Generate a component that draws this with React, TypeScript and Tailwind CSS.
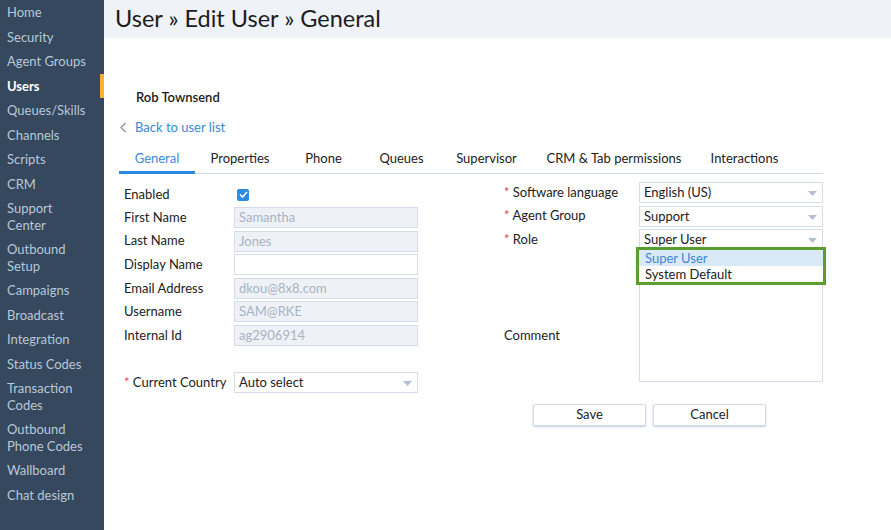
import React from "react";

const NAV: { label: string[]; active?: boolean }[] = [
  { label: ["Home"] },
  { label: ["Security"] },
  { label: ["Agent Groups"] },
  { label: ["Users"], active: true },
  { label: ["Queues/Skills"] },
  { label: ["Channels"] },
  { label: ["Scripts"] },
  { label: ["CRM"] },
  { label: ["Support", "Center"] },
  { label: ["Outbound", "Setup"] },
  { label: ["Campaigns"] },
  { label: ["Broadcast"] },
  { label: ["Integration"] },
  { label: ["Status Codes"] },
  { label: ["Transaction", "Codes"] },
  { label: ["Outbound", "Phone Codes"] },
  { label: ["Wallboard"] },
  { label: ["Chat design"] },
];

const TABS: { label: string; w: string }[] = [
  { label: "General", w: "w-[76px]" },
  { label: "Properties", w: "w-[90px]" },
  { label: "Phone", w: "w-[77px]" },
  { label: "Queues", w: "w-[79px]" },
  { label: "Supervisor", w: "w-[91px]" },
  { label: "CRM & Tab permissions", w: "w-[164px]" },
  { label: "Interactions", w: "w-[97px]" },
];

const LEFT_FIELDS: { label: string; value: string; disabled: boolean }[] = [
  { label: "First Name", value: "Samantha", disabled: true },
  { label: "Last Name", value: "Jones", disabled: true },
  { label: "Display Name", value: "", disabled: false },
  { label: "Email Address", value: "dkou@8x8.com", disabled: true },
  { label: "Username", value: "SAM@RKE", disabled: true },
  { label: "Internal Id", value: "ag2906914", disabled: true },
];

function Caret() {
  return (
    <svg width="9" height="5" viewBox="0 0 9 5" className="absolute right-[5px] top-[8px]">
      <path d="M0 0 L9 0 L4.5 5 Z" fill="#b3bfcd" />
    </svg>
  );
}

function Select({ value }: { value: string }) {
  return (
    <div className="relative h-[21px] w-[184px] border border-[#d5dde8] bg-white pl-[4px] text-[13px] leading-[19px] text-[#222]">
      {value}
      <Caret />
    </div>
  );
}

function Req({ children }: { children: React.ReactNode }) {
  return (
    <span>
      <span className="text-[#e0464a]">* </span>
      {children}
    </span>
  );
}

export default function App() {
  return (
    <div className="flex h-[530px] w-[891px] overflow-hidden bg-white font-['Lato','Noto_Sans',sans-serif] text-[13px] text-[#222]">
      <aside className="w-[104px] shrink-0 bg-[#35485e]">
        {NAV.map((n) => (
          <div
            key={n.label.join(" ")}
            className={`relative px-[7px] py-[4px] leading-[16.5px] ${n.active ? "font-bold text-white" : "text-[#b9c7d8]"}`}
          >
            {n.label.map((l) => (
              <div key={l}>{l}</div>
            ))}
            {n.active && <div className="absolute right-0 top-0 h-full w-[4px] bg-[#fbb034]" />}
          </div>
        ))}
      </aside>

      <main className="flex-1">
        <header className="h-[38px] bg-[#eff2f7] pl-[11px] text-[23.5px] leading-[37px] text-[#1c1c1c]">
          User » Edit User » General
        </header>

        <div className="pl-[15px]">
          <div className="mt-[50px] pl-[17px] leading-[18px] font-semibold text-[#1c1c1c]">Rob Townsend</div>

          <div className="mt-[12px] flex items-center leading-[18px] text-[#3a87d8]">
            <svg width="8" height="11" viewBox="0 0 8 11" className="mr-[8px]">
              <path d="M6.5 1 L2 5.5 L6.5 10" stroke="#8c96a3" strokeWidth="1.4" fill="none" />
            </svg>
            Back to user list
          </div>

          <div className="mt-[14px] flex w-[704px] border-b border-[#cfd8e6]">
            {TABS.map((t, i) => (
              <div
                key={t.label}
                className={`-mb-px border-b-[3px] pb-[4px] text-center leading-[17px] ${t.w} ${i === 0 ? "border-[#2a89e0] text-[#3a87d8]" : "border-transparent text-[#222]"}`}
              >
                {t.label}
              </div>
            ))}
          </div>

          <div className="mt-[9px] flex">
            <div className="w-[299px] pl-[5px]">
              <div className="flex h-[23px] items-center">
                <span className="w-[110px]">Enabled</span>
                <span className="ml-[3px] flex h-[12px] w-[12px] items-center justify-center rounded-[2px] bg-[#2d8be2]">
                  <svg width="9" height="7" viewBox="0 0 9 7">
                    <path d="M1 3.5 L3.5 6 L8 1" stroke="white" strokeWidth="1.6" fill="none" />
                  </svg>
                </span>
              </div>
              <div className="mt-[1px] flex flex-col gap-[2.6px]">
                {LEFT_FIELDS.map((f) => (
                  <div key={f.label} className="flex h-[21px] items-center">
                    <span className="w-[110px]">{f.label}</span>
                    <div
                      className={`h-[21px] w-[184px] border pl-[4px] leading-[19px] ${f.disabled ? "border-[#d5dde8] bg-[#eef1f6] text-[#a8b4c4]" : "border-[#d5dde8] bg-white"}`}
                    >
                      {f.value}
                    </div>
                  </div>
                ))}
              </div>
              <div className="mt-[26px] flex h-[21px] items-center">
                <span className="w-[110px]">
                  <Req>Current Country</Req>
                </span>
                <Select value="Auto select" />
              </div>
            </div>

            <div className="ml-[86px] -mt-[1px] w-[319px]">
              <div className="flex flex-col gap-[2.6px]">
                <div className="flex h-[21px] items-center">
                  <span className="w-[135px]">
                    <Req>Software language</Req>
                  </span>
                  <Select value="English (US)" />
                </div>
                <div className="flex h-[21px] items-center">
                  <span className="w-[135px]">
                    <Req>Agent Group</Req>
                  </span>
                  <Select value="Support" />
                </div>
                <div className="flex h-[21px] items-center">
                  <span className="w-[135px]">
                    <Req>Role</Req>
                  </span>
                  <div className="relative">
                    <Select value="Super User" />
                    <div className="absolute left-[-3px] top-[18px] z-10 w-[190px] border-[3px] border-[#5c9e2d] bg-white">
                      <div className="bg-[#d9e9f8] pl-[6px] leading-[16px] text-[#3a87d8]">Super User</div>
                      <div className="pl-[6px] leading-[16px] text-[#222]">System Default</div>
                    </div>
                  </div>
                </div>
              </div>
              <div className="mt-[1px] flex">
                <span className="w-[135px] pt-[75px]">Comment</span>
                <div className="h-[131px] w-[184px] border border-[#d5dde8] bg-white" />
              </div>
              <div className="ml-[29px] mt-[22px] flex gap-[7px]">
                <button className="h-[22px] w-[113px] rounded-[2px] border border-[#d2dae5] bg-white text-[13px] text-[#222] shadow-[0_1px_2px_rgba(140,160,190,0.5)]">
                  Save
                </button>
                <button className="h-[22px] w-[113px] rounded-[2px] border border-[#d2dae5] bg-white text-[13px] text-[#222] shadow-[0_1px_2px_rgba(140,160,190,0.5)]">
                  Cancel
                </button>
              </div>
            </div>
          </div>
        </div>
      </main>
    </div>
  );
}
